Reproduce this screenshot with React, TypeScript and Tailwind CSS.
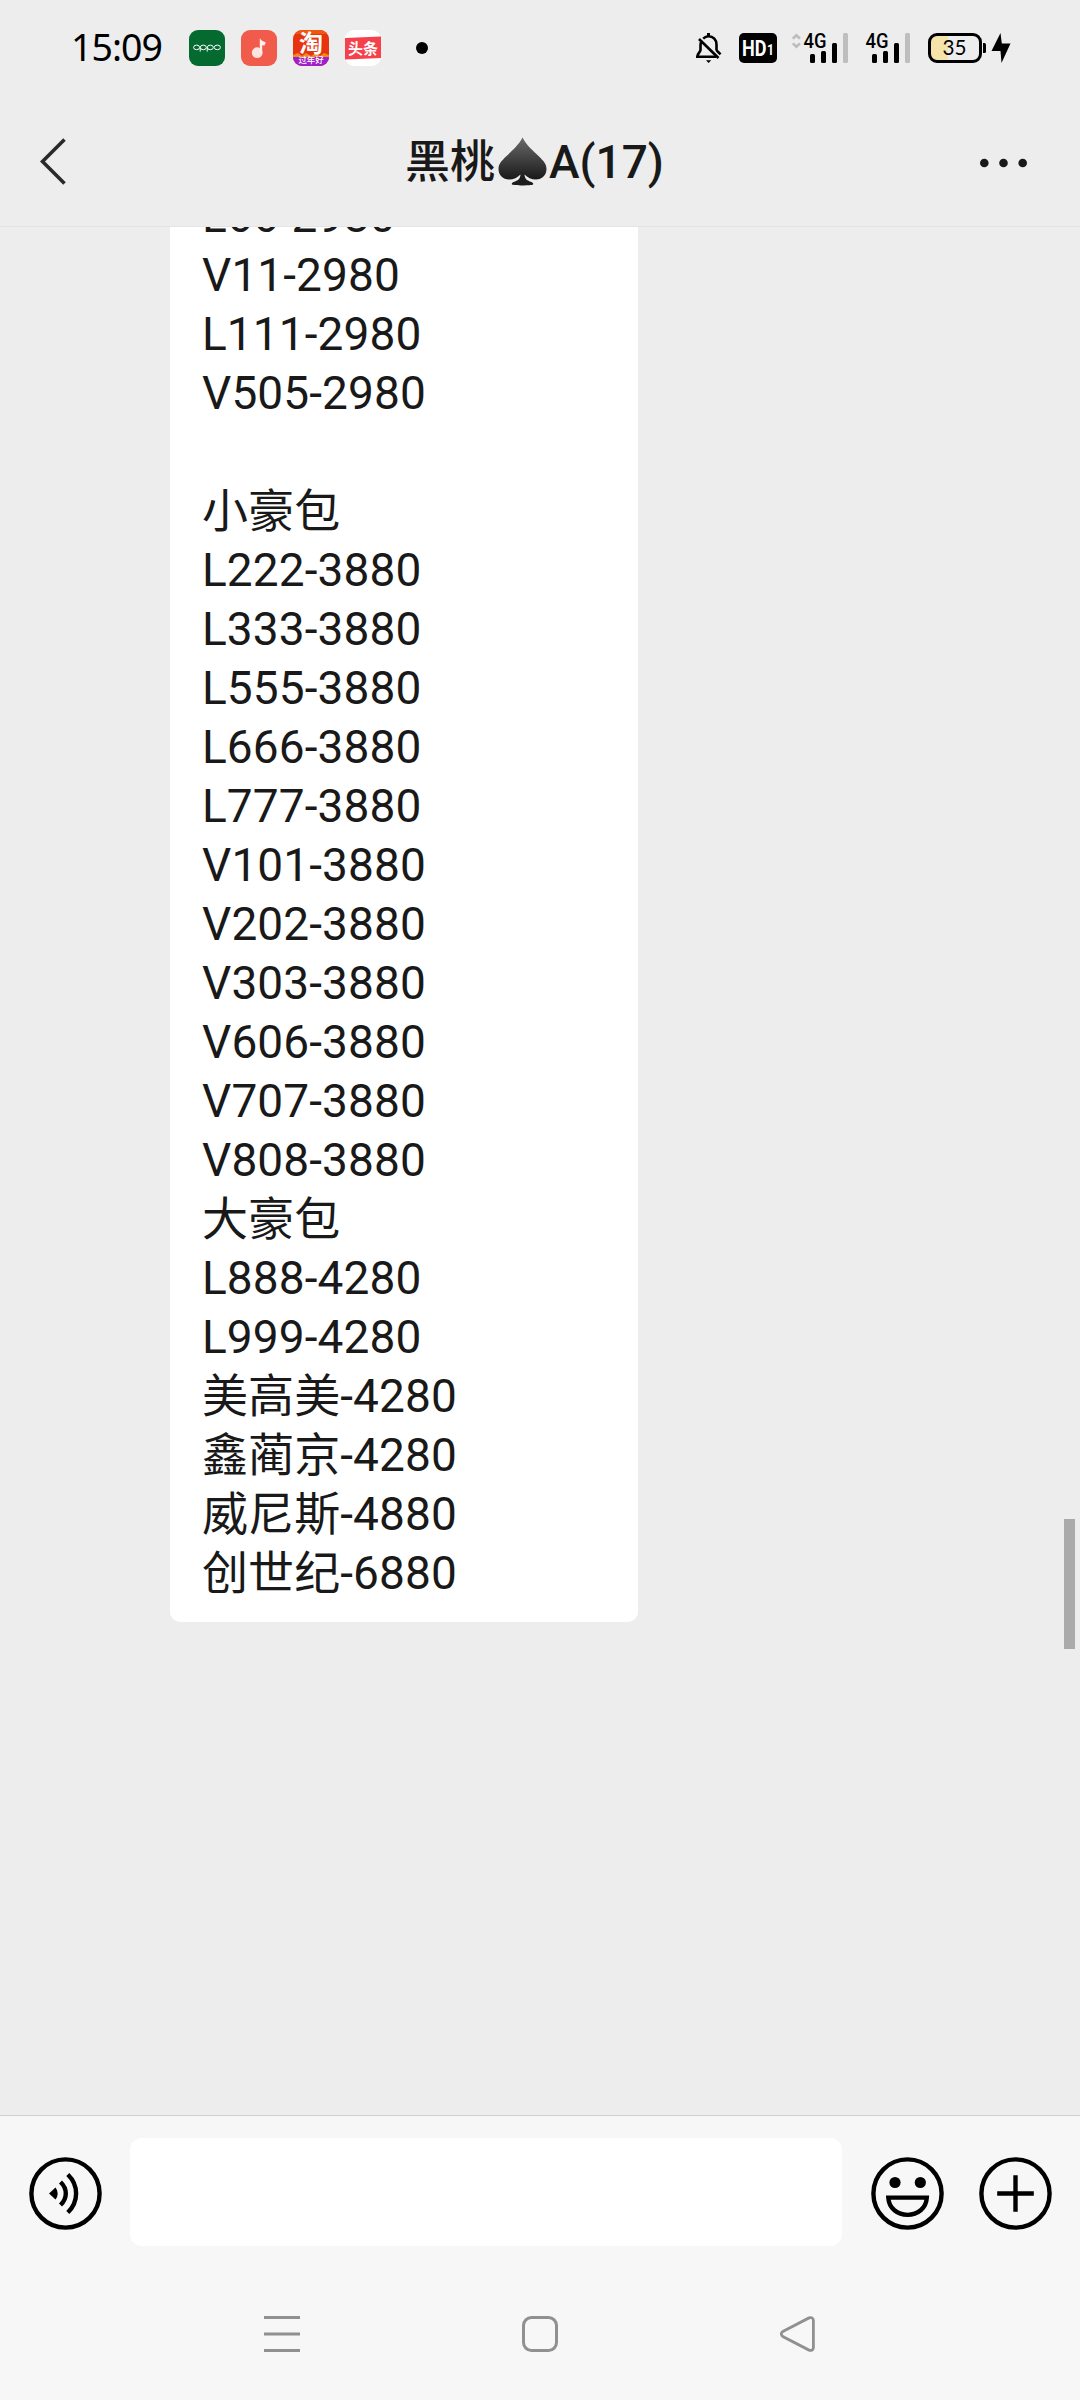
import { useId } from 'react';

const messageLines = [
  'L66-2980',
  'V11-2980',
  'L111-2980',
  'V505-2980',
  '',
  '小豪包',
  'L222-3880',
  'L333-3880',
  'L555-3880',
  'L666-3880',
  'L777-3880',
  'V101-3880',
  'V202-3880',
  'V303-3880',
  'V606-3880',
  'V707-3880',
  'V808-3880',
  '大豪包',
  'L888-4280',
  'L999-4280',
  '美高美-4280',
  '鑫蔺京-4280',
  '威尼斯-4880',
  '创世纪-6880',
];

function OppoIcon() {
  return (
    <svg width="36" height="36" viewBox="0 0 36 36" fill="none">
      <rect width="36" height="36" rx="9" fill="#046a30" />
      <g stroke="#fff" strokeWidth="1">
        <ellipse cx="7.6" cy="17.4" rx="3" ry="2.3" />
        <ellipse cx="14.3" cy="17.4" rx="3" ry="2.3" />
        <ellipse cx="21.3" cy="17.4" rx="3" ry="2.3" />
        <ellipse cx="28.3" cy="17.4" rx="3.1" ry="2.3" />
        <path d="M11.2 17.4v4.2M18.2 17.4v4.2" />
      </g>
    </svg>
  );
}

function MusicIcon() {
  return (
    <svg width="36" height="36" viewBox="0 0 36 36">
      <rect width="36" height="36" rx="9" fill="#f15b4b" />
      <circle cx="16.2" cy="22.7" r="5.4" fill="#fde3df" />
      <path d="M18.8 23V8.2c1 2 3 3 6 4.3l-1.6 3.3-2-.8v8z" fill="#fff1ee" />
    </svg>
  );
}

function TaobaoIcon() {
  return (
    <svg width="36" height="36" viewBox="0 0 36 36">
      <defs>
        <clipPath id="tb-clip">
          <rect width="36" height="36" rx="9" />
        </clipPath>
      </defs>
      <g clipPath="url(#tb-clip)">
        <rect width="36" height="36" fill="#e8330f" />
        <path d="M0 0h36v4H0z" fill="#f0560f" />
        <path d="M0 25l5-2 4 3 4-3 5 3 5-3 4 3 4-3 5 2v4H0z" fill="#f08a1c" />
        <rect y="27" width="36" height="10" fill="#a01fc8" />
        <text x="18" y="22" textAnchor="middle" fontSize="24" fontWeight="700" fill="#fff" fontFamily="'Noto Sans CJK SC', sans-serif">淘</text>
        <text x="18" y="33.2" textAnchor="middle" fontSize="8.4" fontWeight="500" fill="#fff" fontFamily="'Noto Sans CJK SC', sans-serif">过年好</text>
      </g>
    </svg>
  );
}

function ToutiaoIcon() {
  return (
    <svg width="36" height="36" viewBox="0 0 36 36">
      <rect width="36" height="36" rx="9" fill="#fff" />
      <path d="M0 8l36-1.5V28L0 29.5z" fill="#f5414c" />
      <text x="18" y="23.6" textAnchor="middle" fontSize="15" fontWeight="700" fill="#fff" fontFamily="'Noto Sans CJK SC', sans-serif">头条</text>
    </svg>
  );
}

function BellOffIcon() {
  return (
    <svg width="26" height="30" viewBox="0 0 26 30" fill="none" stroke="#000" strokeWidth="2.6">
      <path d="M7.2 5.6C9 3.9 10.6 3.3 12.5 3.3c4.8 0 8 3.6 8 8.2v5.2c.4 1.6 2 2.3 4 4.6" />
      <path d="M5 9.2c-.4 1-.5 2-.5 3.3v4.7C4.3 19 1.5 20.4 1.3 23.7H20" />
      <path d="M3 6l19.500 19" />
      <path d="M12.5 0v4" strokeWidth="3" />
      <path d="M10 27.3h5.2L12.6 30z" fill="#000" stroke="none" />
    </svg>
  );
}

function HdIcon() {
  return (
    <svg className="ml-[17px]" width="38" height="30" viewBox="0 0 38 30">
      <rect width="38" height="30" rx="5" fill="#000" />
      <g fill="#fff" fontFamily="Roboto, sans-serif" fontWeight="700">
        <text x="3" y="23" fontSize="22" textLength="24.5" lengthAdjust="spacingAndGlyphs">HD</text>
        <text x="28" y="22.3" fontSize="14" textLength="7" lengthAdjust="spacingAndGlyphs">1</text>
      </g>
    </svg>
  );
}

function SignalIcon({ arrows = false }: { arrows?: boolean }) {
  return (
    <svg className="ml-[14px] overflow-visible" width="58" height="30" viewBox="0 0 58 30">
      {arrows && (
        <path d="M1.8 5.6l3.6-3.4L9 5.6M1.8 10.4l3.6 3.4L9 10.4" fill="none" stroke="#bcbcbc" strokeWidth="2.6" />
      )}
      <text x="12.6" y="14.6" fontSize="20" fontWeight="500" fontFamily="Roboto, sans-serif" textLength="23" lengthAdjust="spacingAndGlyphs">4G</text>
      <rect x="19" y="21" width="5" height="9" rx="1.5" />
      <rect x="30" y="18" width="5" height="12" rx="1.5" />
      <rect x="41" y="10" width="5" height="20" rx="1.5" />
      <rect x="52" y="0" width="5" height="30" rx="1.5" fill="#bebebe" />
    </svg>
  );
}

function BatteryIcon() {
  return (
    <svg className="ml-[17px]" width="84" height="30" viewBox="0 0 84 30">
      <path d="M9 2h11v26H9a7 7 0 0 1-7-7V9a7 7 0 0 1 7-7z" fill="#f5e3a9" />
      <rect x="1.500" y="1.500" width="51" height="27" rx="7.500" fill="none" stroke="#000" strokeWidth="3" />
      <path d="M55 10h1.500a1.500 1.500 0 0 1 1.500 1.500v7a1.500 1.500 0 0 1-1.500 1.500H55z" />
      <text x="14.6" y="22.2" fontSize="21.5" fontFamily="Lato, sans-serif" fontWeight="400" textLength="24" lengthAdjust="spacingAndGlyphs">35</text>
      <path d="M72.500 0L63.500 18h9l1 12L82.500 10.500h-8.700z" />
    </svg>
  );
}

function StatusBar() {
  return (
    <div className="flex h-24 items-center justify-between pr-[68px] pl-[71px]">
      <div className="flex items-center">
        <span className="w-[118px] pb-[2px] font-['Noto_Sans',sans-serif] text-[37.5px] leading-none tracking-[-1px] text-black">15:09</span>
        <div className="flex gap-4">
          <OppoIcon />
          <MusicIcon />
          <TaobaoIcon />
          <ToutiaoIcon />
        </div>
        <div className="ml-[35px] size-3 shrink-0 rounded-full bg-black" />
      </div>
      <div className="flex">
        <BellOffIcon />
        <HdIcon />
        <SignalIcon arrows />
        <div className="-ml-[10px]">
          <SignalIcon />
        </div>
        <BatteryIcon />
      </div>
    </div>
  );
}

function Spade() {
  const id = useId();
  return (
    <svg width="49" height="49" viewBox="0 0 49 49" className="mr-[2px] ml-[3px]">
      <defs>
        <linearGradient id={id} x1="0" y1="0" x2="0" y2="1">
          <stop offset="0" stopColor="#6a6a6a" />
          <stop offset="0.5" stopColor="#3c3c3c" />
          <stop offset="0.85" stopColor="#1c1c1c" />
        </linearGradient>
      </defs>
      <path
        d="M24.500.5C29 9 35 13.500 41 19.500c4.500 4.500 7.500 7.500 7.500 12.500 0 6-4.500 10.500-10.500 10.500-4.500 0-8.500-2-11.500-5 .3 4.500 2.500 6 7 7.500 1.800.8 2 2 1.500 2.500-1.500 1.200-19.500 1.200-21 0-.5-.5-.3-1.700 1.500-2.500 4.500-1.500 6.700-3 7-7.500-3 3-7 5-11.500 5C5 42.500.5 38 .5 32c0-5 3-8 7.500-12.500C14 13.500 20 9 24.500.5z"
        fill={`url(#${id})`}
      />
    </svg>
  );
}

function TitleBar() {
  return (
    <div className="flex h-[130px] items-center justify-between px-10 text-[#191919]">
      <svg width="50" height="50" viewBox="0 0 50 50" fill="none" stroke="#2a2a2a" strokeWidth="3.6">
        <path d="M24.500 3.500L2.500 25.500l22 22" />
      </svg>
      <h1 className="flex items-center font-[Roboto,'Noto_Sans_CJK_SC',sans-serif] text-[45px] leading-[60px] font-medium">
        <span className="pt-1">黑桃</span>
        <Spade />
        <span className="pt-[2px] text-[46px]">A(17)</span>
      </h1>
      <svg width="50" height="12" viewBox="0 0 50 12" fill="#191919" className="mr-[11px] mt-1">
        <circle cx="5.3" cy="6" r="4.3" />
        <circle cx="24.5" cy="6" r="4.3" />
        <circle cx="43.7" cy="6" r="4.3" />
      </svg>
    </div>
  );
}

function Chat() {
  return (
    <main className="relative h-[1889px] overflow-hidden border-t border-[#e4e4e4]">
      <div className="-mt-10 ml-[170px] w-[468px] rounded-[10px] bg-white pb-[19px] pl-8">
        {messageLines.map((line, i) => (
          <p key={i} className="h-[59px] font-[Roboto,'Noto_Sans_CJK_SC',sans-serif] text-[46px] leading-[59px] tracking-[0.1px] whitespace-nowrap text-[#191919]">
            {line}
          </p>
        ))}
      </div>
      {/* Scroll thumb */}
      <div className="absolute top-[1292px] right-[5px] h-[130px] w-[11px] bg-[#aaaaaa]" />
    </main>
  );
}

function InputBar() {
  return (
    <div className="flex h-[155px] items-start border-t border-[#d0d0d0] pl-[29px]">
      <svg className="mt-[41px]" width="73" height="73" viewBox="0 0 73 73" fill="none" stroke="#000" strokeWidth="4.4">
        <circle cx="36.5" cy="36.5" r="34.1" />
        <path d="M20 36.500l6.500-6q2.200 2.700 2.200 6t-2.200 6z" fill="#000" stroke="none" />
        <path d="M31.500 25q5.300 5 5.300 11.500T31.500 48" />
        <path d="M38.800 17.500q8.300 8 8.300 19t-8.300 19" />
      </svg>
      <div className="mt-[22px] ml-7 h-[108px] w-[712px] rounded-[12px] bg-white" />
      <svg className="mt-[41px] ml-[29px]" width="73" height="73" viewBox="0 0 73 73" fill="none" stroke="#000" strokeWidth="4.4">
        <circle cx="36.5" cy="36.5" r="34.1" />
        <circle cx="24" cy="25.5" r="5.6" fill="#000" stroke="none" />
        <circle cx="49.3" cy="25.5" r="5.6" fill="#000" stroke="none" />
        <path d="M17.300 40.600h38.500c-.6 10.800-9.300 17.300-19.250 17.300S17.900 51.400 17.300 40.600z" />
      </svg>
      <svg className="mt-[41px] ml-[35px]" width="73" height="73" viewBox="0 0 73 73" fill="none" stroke="#000" strokeWidth="4.4">
        <circle cx="36.5" cy="36.5" r="34.1" />
        <path d="M36.500 18.200v36.600M18.200 36.500h36.600" />
      </svg>
    </div>
  );
}

function NavBar() {
  return (
    <div className="flex items-center justify-between px-[264px] pt-[46px]">
      <svg width="36" height="36" viewBox="0 0 36 36" stroke="#909090" strokeWidth="3">
        <path d="M0 1.500h36M0 18h36M0 34.500h36" />
      </svg>
      <svg width="36" height="36" viewBox="0 0 36 36" fill="none" stroke="#909090" strokeWidth="3">
        <rect x="1.5" y="1.5" width="33" height="33" rx="8" />
      </svg>
      <svg width="36" height="36" viewBox="0 0 36 36" fill="none" stroke="#909090" strokeWidth="2.800">
        <path d="M2.800 15.500L29 1.900Q33 .5 33.400 4.500v27q-.4 4-4.400 2.600L2.800 20.500q-3-2.500 0-5z" />
      </svg>
    </div>
  );
}

export default function App() {
  return (
    <div className="h-[2400px] w-[1080px] overflow-hidden bg-[#ededed]">
      <header>
        <StatusBar />
        <TitleBar />
      </header>
      <Chat />
      <footer className="h-[285px] bg-[#f7f7f7]">
        <InputBar />
        <NavBar />
      </footer>
    </div>
  );
}
